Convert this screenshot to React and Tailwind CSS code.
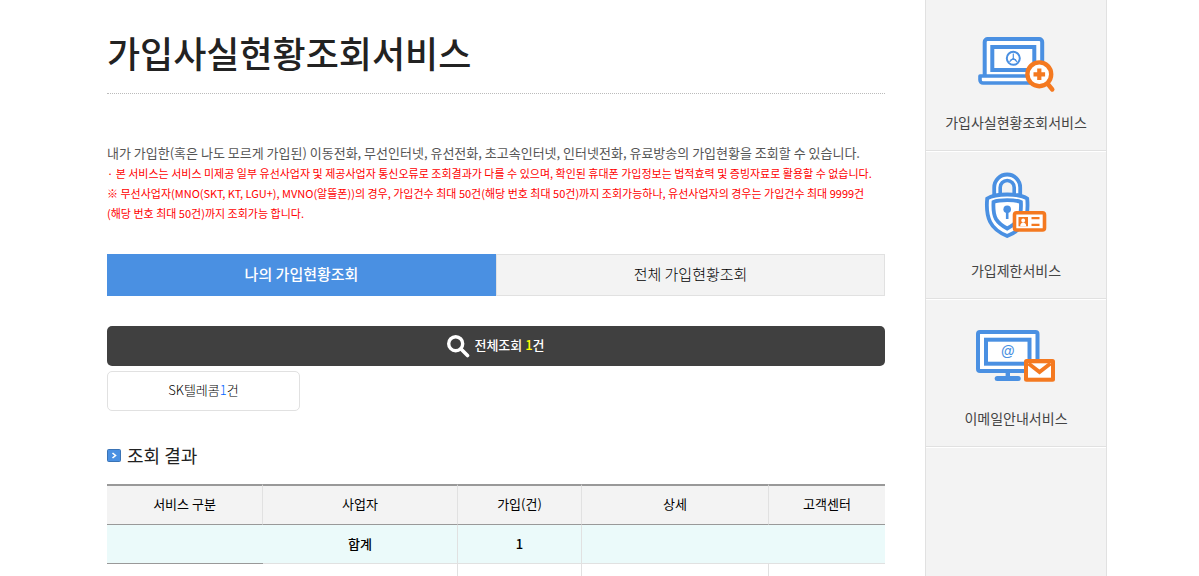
import React, { useState } from "react";

const BLUE = "#4a90e2";
const ORANGE = "#f47920";

function LaptopIcon() {
  return (
    <svg width="84" height="80" viewBox="0 0 84 80" fill="none" aria-hidden="true">
      <path d="M10.7 57V22a3 3 0 0 1 3-3h51.5a3 3 0 0 1 3 3v35z" fill="#fff" stroke={BLUE} strokeWidth="4" />
      <path d="M6 56h66v7H9a3 3 0 0 1-3-3z" fill="#fff" stroke={BLUE} strokeWidth="3.6" strokeLinejoin="round" />
      <rect x="18.3" y="27" width="42" height="23" fill="#fff" stroke={BLUE} strokeWidth="4" />
      <circle cx="39.3" cy="38.3" r="6.5" stroke={BLUE} strokeWidth="2" />
      <path d="M39.3 33.5v4.8l-3.8 3.5M39.3 38.3l3.8 3.5M36.5 39.5h5.6" stroke={BLUE} strokeWidth="1.2" />
      <path d="M73 63l5.3 6.5" stroke={ORANGE} strokeWidth="4.4" strokeLinecap="round" />
      <circle cx="65.3" cy="54.3" r="11.9" fill="#fff" stroke={ORANGE} strokeWidth="4.4" />
      <path d="M65.3 48.5v11.6M59.5 54.3h11.6" stroke={ORANGE} strokeWidth="4.2" />
    </svg>
  );
}

function LockIcon() {
  return (
    <svg width="84" height="80" viewBox="0 0 84 80" fill="none" aria-hidden="true">
      <path d="M20.2 28v-8.5a13 13 0 0 1 26 0V28z" fill="#fff" stroke={BLUE} strokeWidth="3.8" />
      <path d="M26.2 28v-8.5a7 7 0 0 1 14 0V28z" fill="#f3f3f3" stroke={BLUE} strokeWidth="3.6" />
      <path
        d="M13.2 30.5C18 27.5 25 26.5 33.2 26.5s15.2 1 20 4c.8 8.5.8 16-3 23.5-3.5 7-9.500 11-17 14-7.5-3-13.5-7-17-14-3.8-7.5-3.8-15-3-23.5z"
        fill="#fff"
        stroke={BLUE}
        strokeWidth="3.8"
      />
      <path
        d="M19.5 34C23 32.5 28 32.2 33.2 32.2s10.2.3 13.7 1.8c.3 6 .3 12-2.5 17-2.7 4.5-6.5 7-11.2 9.5-4.7-2.5-8.5-5-11.2-9.5-2.8-5-2.8-11-2.5-17z"
        stroke={BLUE}
        strokeWidth="3.8"
      />
      <circle cx="33.2" cy="41.3" r="3.8" fill={BLUE} />
      <path d="M33.2 42v9" stroke={BLUE} strokeWidth="2.6" />
      <rect x="40.5" y="44.8" width="30" height="17.2" rx="2" fill="#fff" stroke={ORANGE} strokeWidth="3.6" />
      <rect x="44.5" y="49" width="9.5" height="9.3" fill={ORANGE} />
      <circle cx="49.2" cy="52.5" r="1.9" fill="#fff" />
      <path d="M46.2 58.3c0-5 6-5 6 0z" fill="#fff" />
      <path d="M57.5 50.2h8M57.5 56.8h8" stroke={ORANGE} strokeWidth="2.2" />
    </svg>
  );
}

function MailIcon() {
  return (
    <svg width="84" height="80" viewBox="0 0 84 80" fill="none" aria-hidden="true">
      <rect x="4" y="16" width="59.5" height="39" rx="2" fill="#fff" stroke={BLUE} strokeWidth="4" />
      <rect x="12" y="23.7" width="43.5" height="24" fill="#fff" stroke={BLUE} strokeWidth="4" />
      <text x="33.5" y="40" textAnchor="middle" fontSize="14" fontWeight="bold" fontStyle="italic" fontFamily="Liberation Sans, sans-serif" fill={BLUE}>
        @
      </text>
      <path d="M33.8 56v6" stroke={BLUE} strokeWidth="4.4" />
      <path d="M23.2 62.5h21" stroke={BLUE} strokeWidth="5" strokeLinecap="round" />
      <rect x="50" y="43" width="31" height="22.7" rx="2.5" fill={ORANGE} />
      <path d="M54 47.3h23v14.4H54z" fill="#fff" />
      <path d="M54.5 47.5l11 8.5 11-8.5" stroke={ORANGE} strokeWidth="4" />
    </svg>
  );
}

const services = [
  { label: "가입사실현황조회서비스", Icon: LaptopIcon },
  { label: "가입제한서비스", Icon: LockIcon },
  { label: "이메일안내서비스", Icon: MailIcon },
];

const tabs = ["나의 가입현황조회", "전체 가입현황조회"];

export default function App() {
  const [activeTab, setActiveTab] = useState(0);

  return (
    <div className="bg-white pl-[15px] font-['Noto_Sans_CJK_KR',sans-serif] text-[#222]">
      <div className="mx-auto flex min-h-screen max-w-[1000px] gap-10">
        <main className="min-w-0 flex-1">
          <h1 className="border-b border-dotted border-[#bbb] pt-[26px] pb-3.5 text-4xl leading-[53px] font-medium">
            가입사실현황조회서비스
          </h1>

          {/* Notice */}
          <div className="mt-[49px] text-[11px] leading-5 text-[#f00]">
            <p className="text-[13px] whitespace-nowrap text-[#555]">
              내가 가입한(혹은 나도 모르게 가입된) 이동전화, 무선인터넷, 유선전화, 초고속인터넷, 인터넷전화, 유료방송의 가입현황을 조회할 수 있습니다.
            </p>
            <p>
              · 본 서비스는 서비스 미제공 일부 유선사업자 및 제공사업자 통신오류로 조회결과가 다를 수 있으며, 확인된 휴대폰 가입정보는 법적효력 및 증빙자료로 활용할 수 없습니다.
            </p>
            <p>
              ※ 무선사업자(MNO(SKT, KT, LGU+), MVNO(알뜰폰))의 경우, 가입건수 최대 50건(해당 번호 최대 50건)까지 조회가능하나, 유선사업자의 경우는 가입건수 최대 9999건
              <br />
              (해당 번호 최대 50건)까지 조회가능 합니다.
            </p>
          </div>

          {/* Tabs */}
          <div className="mt-[31px] grid grid-cols-2">
            {tabs.map((tab, i) => (
              <button
                key={tab}
                type="button"
                onClick={() => setActiveTab(i)}
                className={`h-[42px] border pb-0.5 text-[15px] ${
                  activeTab === i
                    ? "border-[#4a90e2] bg-[#4a90e2] font-medium text-white"
                    : "border-[#e1e1e1] bg-[#f3f3f3] font-light text-black"
                }`}
              >
                {tab}
              </button>
            ))}
          </div>

          {/* Result filters */}
          <button
            type="button"
            className="mt-[30px] flex h-10 w-full items-center justify-center gap-1 rounded-[5px] bg-[#404040] text-[13px] font-medium text-white"
          >
            <svg width="23" height="23" viewBox="0 0 23 23" fill="none" stroke="#fff" aria-hidden="true">
              <circle cx="8.7" cy="8.7" r="7" strokeWidth="3.4" />
              <path d="M14 14l6.5 6.5" strokeWidth="3.6" strokeLinecap="round" />
            </svg>
            <span className="pb-0.5">
              전체조회 <span className="text-[#ff0]">1</span>건
            </span>
          </button>
          <button
            type="button"
            className="mt-[5px] block h-10 w-[193px] rounded-[5px] border border-[#e1e1e1] bg-white pb-0.5 text-[13px] font-light text-black"
          >
            SK텔레콤<span className="text-[#06f]">1</span>건
          </button>

          {/* Results */}
          <h2 className="mt-8 flex items-center gap-1.5 text-lg leading-6">
            <svg width="14" height="14" viewBox="0 0 14 14" fill="none" aria-hidden="true">
              <rect x="0.5" y="1.5" width="13" height="12" rx="1" fill={BLUE} stroke="#3a73b5" />
              <path d="M5.5 5l3 2.5-3 2.5" stroke="#fff" strokeWidth="1.6" />
            </svg>
            조회 결과
          </h2>
          <table className="mt-[17px] w-full table-fixed border-separate border-spacing-0 text-center text-[13px] leading-5">
            <thead>
              <tr className="h-[41px] bg-[#f3f3f3] text-black *:border-t-2 *:border-b *:border-[#999] *:pb-0.5 *:font-normal *:not-last:border-r *:not-last:border-r-[#e1e1e1]">
                <th className="w-[156px]">서비스 구분</th>
                <th className="w-[195px]">사업자</th>
                <th className="w-[124px]">가입(건)</th>
                <th className="w-[187px]">상세</th>
                <th>고객센터</th>
              </tr>
            </thead>
            <tbody>
              <tr className="h-[39px] bg-[#ebfafa] font-medium text-black *:border-b *:border-[#e1e1e1]">
                <td className="border-b-[#999]!"></td>
                <td className="border-r">합계</td>
                <td className="border-r">1</td>
                <td colSpan={2}></td>
              </tr>
              <tr className="h-3 *:border-[#e1e1e1]">
                <td></td>
                <td className="border-r"></td>
                <td className="border-r"></td>
                <td className="border-r"></td>
                <td></td>
              </tr>
            </tbody>
          </table>
        </main>

        {/* Quick menu */}
        <aside className="w-[182px] shrink-0 border-x border-[#e1e1e1] bg-[#f3f3f3] pt-[3px]">
          <nav>
            {services.map(({ label, Icon }) => (
              <a
                key={label}
                href="#"
                className="flex h-[148px] flex-col items-center border-t border-b border-t-white border-b-[#e1e1e1] pt-4 text-sm text-[#444] first:border-t-transparent"
              >
                <Icon />
                <span className="mt-3 leading-5">{label}</span>
              </a>
            ))}
            <div className="border-t border-white"></div>
          </nav>
        </aside>
      </div>
    </div>
  );
}
